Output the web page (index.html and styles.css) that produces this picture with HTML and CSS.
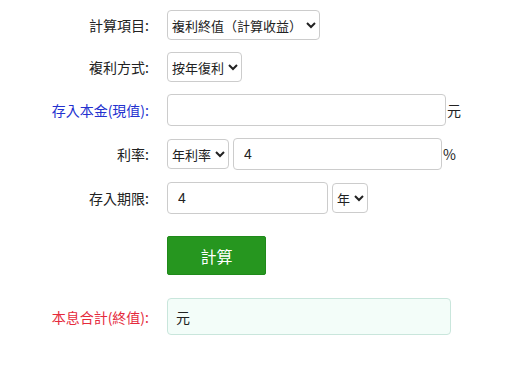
FILE: index.html
```html
<!DOCTYPE html>
<html lang="zh-Hant">
<head>
    <meta charset="UTF-8">
    <title>複利計算</title>
    <link rel="stylesheet" href="styles.css">
</head>
<body>
    <div class="calc">
        <div class="row">
            <label class="label">計算項目:</label>
            <div class="field">
                <select class="sel">
                    <option>複利終值（計算收益）</option>
                </select>
            </div>
        </div>
        <div class="row">
            <label class="label">複利方式:</label>
            <div class="field">
                <select class="sel">
                    <option>按年復利</option>
                </select>
            </div>
        </div>
        <div class="row">
            <label class="label blue">存入本金(現值):</label>
            <div class="field">
                <input class="txt principal" type="text"><span class="unit">元</span>
            </div>
        </div>
        <div class="row">
            <label class="label">利率:</label>
            <div class="field">
                <select class="sel">
                    <option>年利率</option>
                </select>
                <input class="txt rate" type="text" value="4"><span class="unit">%</span>
            </div>
        </div>
        <div class="row">
            <label class="label">存入期限:</label>
            <div class="field">
                <input class="txt term" type="text" value="4">
                <select class="sel">
                    <option>年</option>
                </select>
            </div>
        </div>
        <div class="row btn-row">
            <span class="label"></span>
            <div class="field">
                <button class="calc-btn">計算</button>
            </div>
        </div>
        <div class="row">
            <label class="label red">本息合計(終值):</label>
            <div class="field">
                <div class="result">元</div>
            </div>
        </div>
    </div>
</body>
</html>
```

FILE: styles.css
```css
body {
    margin: 0;
    font-family: "Noto Sans CJK TC", "Liberation Sans", sans-serif;
    font-size: 14px;
    color: #222;
    background-color: #fff;
}
.calc {
    padding-top: 10px;
}
.row {
    display: flex;
    align-items: center;
    margin-bottom: 12px;
}
.btn-row {
    margin-top: 22px;
    margin-bottom: 23px;
}
.label {
    width: 149px;
    margin-right: 18px;
    text-align: right;
    flex-shrink: 0;
}
.blue {
    color: #2431cf;
}
.red {
    color: #e52a3c;
}
.field {
    display: flex;
    align-items: center;
    gap: 4px;
}
.sel {
    height: 30px;
    font-family: "Noto Sans CJK TC", sans-serif;
    font-size: 13px;
    color: #222;
    background-color: #fff;
    border: 1px solid #ccc;
    border-radius: 4px;
    padding: 0;
}
.txt {
    box-sizing: border-box;
    height: 32px;
    border: 1px solid #ccc;
    border-radius: 4px;
    padding: 0 10px;
    font-family: "Liberation Sans", sans-serif;
    font-size: 14px;
    color: #222;
}
.principal {
    width: 279px;
}
.rate {
    width: 209px;
}
.term {
    width: 161px;
}
.unit {
    margin-left: -3px;
}
.calc-btn {
    width: 99px;
    height: 39px;
    border: 1px solid #1f8a1a;
    border-radius: 2px;
    background-color: #26961f;
    color: #fff;
    font-family: "Noto Sans CJK TC", sans-serif;
    font-size: 16px;
}
.result {
    box-sizing: border-box;
    width: 284px;
    height: 37px;
    display: flex;
    align-items: center;
    padding-left: 8px;
    background-color: #f3fdf9;
    border: 1px solid #c9e6dc;
    border-radius: 4px;
}
```
